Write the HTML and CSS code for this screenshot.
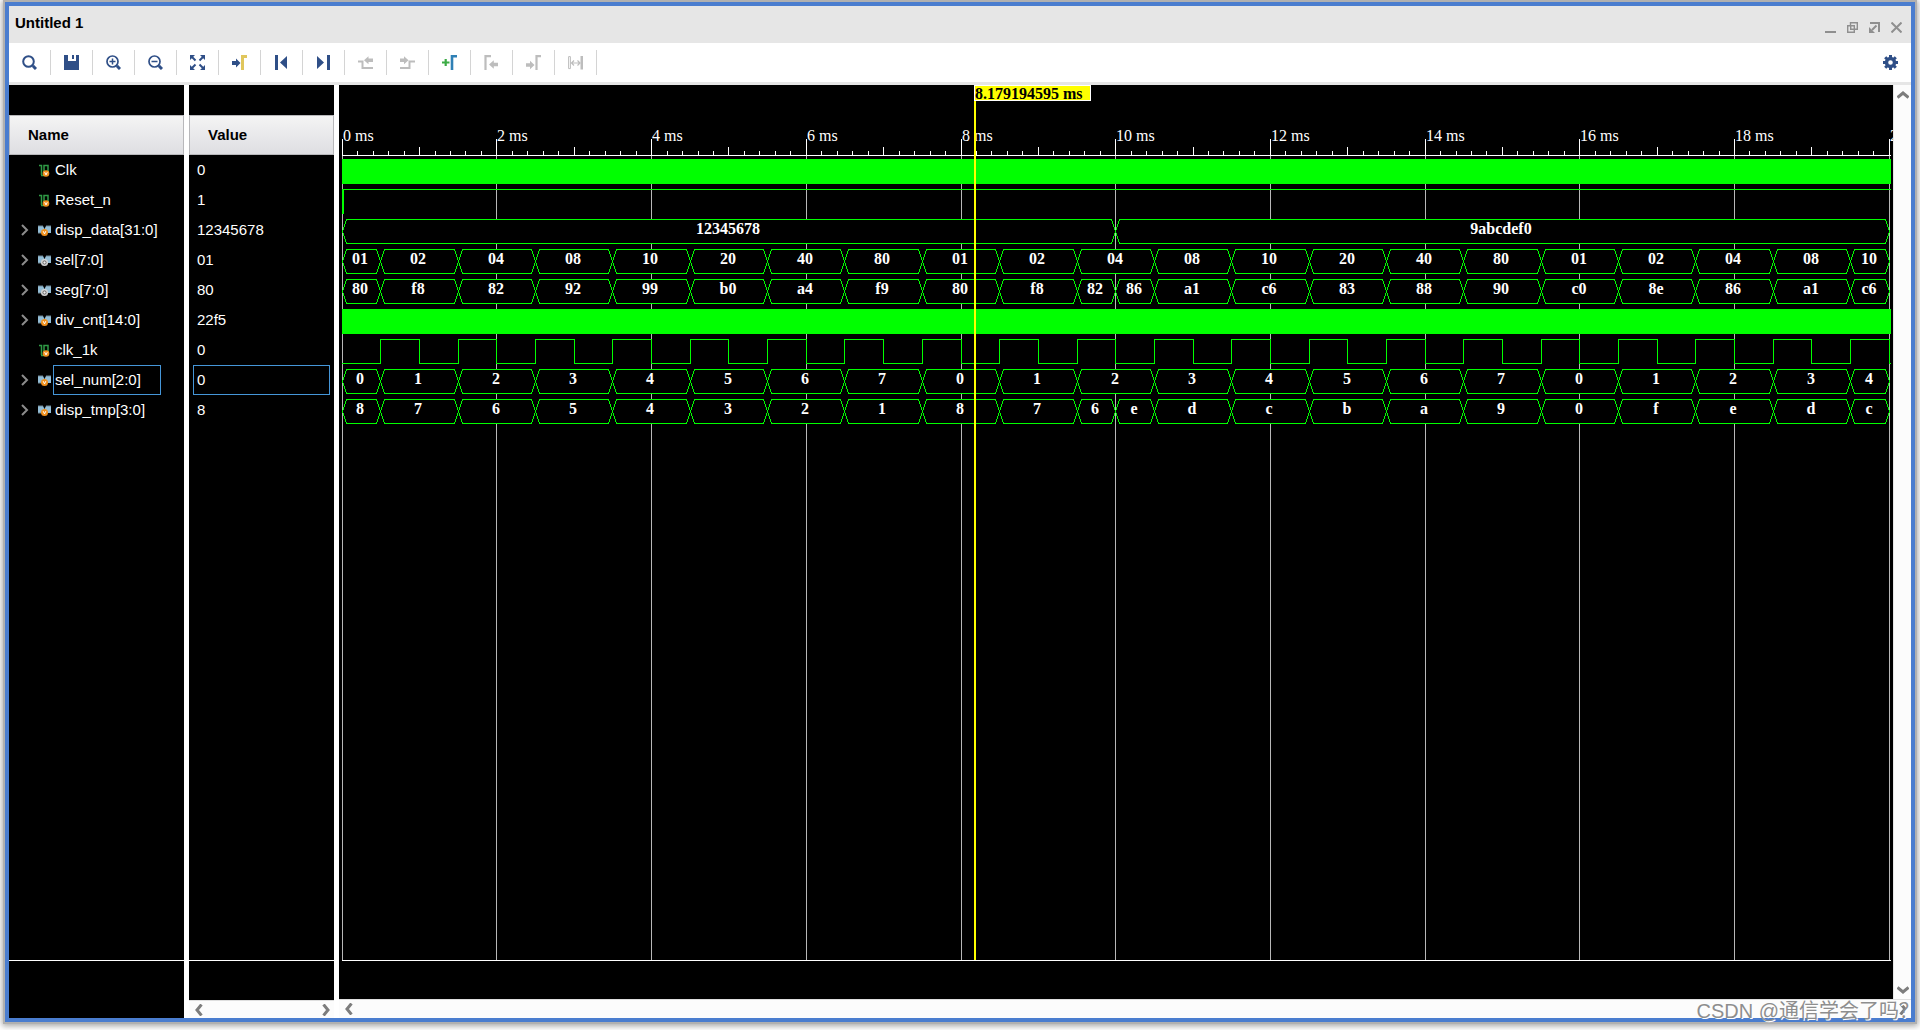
FILE: index.html
```html
<!DOCTYPE html>
<html lang="en">
<head>
<meta charset="utf-8">
<title>Untitled 1</title>
<link rel="stylesheet" href="styles.css">
</head>
<body>
<svg class="symbols" aria-hidden="true">
  <symbol id="chevron" viewBox="0 0 8 12"><path d="M1 1l5 5-5 5" fill="none" stroke="currentColor" stroke-width="2"/></symbol>
  <symbol id="scroll" viewBox="0 0 8 12"><path d="M1.500 .5L6 6l-4.500 5.500" fill="none" stroke="currentColor" stroke-width="3"/></symbol>
  <symbol id="wire" viewBox="0 0 13 13">
    <path d="M1 1.500h2.500V11M3 11.500h3V1.500h4V8" fill="none" stroke="#2f9a45" stroke-width="1.500"/>
    <circle cx="8" cy="9.500" r="3.300" fill="#f0901e"/><path d="M6.700 8.200L8 10.900l1.300-2.700" fill="none" stroke="#fff" stroke-width="1"/>
  </symbol>
  <symbol id="bus" viewBox="0 0 13 13">
    <path d="M0 2h5l1.500 3L8 2h5v7h-3L6.500 7 3 9H0z" fill="#93bdd6"/><path d="M0 2h5M8 2h5M0 9h3" stroke="#6f8794" stroke-width="1"/>
    <circle cx="6.500" cy="8.500" r="3.500" fill="#f0901e"/><path d="M5.200 7.200l1.300 2.700 1.300-2.700" fill="none" stroke="#fff" stroke-width="1"/>
  </symbol>
  <symbol id="busout" viewBox="0 0 13 13">
    <path d="M0 2h5l1.500 3L8 2h5v7h-3L6.500 7 3 9H0z" fill="#93bdd6"/><path d="M0 2h5M8 2h5M0 9h3" stroke="#6f8794" stroke-width="1"/>
    <circle cx="6.500" cy="8.500" r="3.600" fill="#d2d2d2"/><circle cx="6.500" cy="8.500" r="1.600" fill="#eee" stroke="#666"/>
  </symbol>
</svg>

<main class="window">
  <header class="titlebar">
    <h1 class="title">Untitled 1</h1>
    <div class="controls">
      <button class="control" aria-label="Minimize"><svg viewBox="0 0 11 11"><path d="M0 10h11" stroke="currentColor" stroke-width="2"/></svg></button>
      <button class="control" aria-label="Restore"><svg viewBox="0 0 11 11"><path d="M3.500 3.500V.7h6.800v6.600H7.500M.7 3.700h6.600v6.600H.7zM3.700 3.700v3.600h3.600" fill="none" stroke="currentColor" stroke-width="1.400"/></svg></button>
      <button class="control" aria-label="Float"><svg viewBox="0 0 11 11"><path d="M1 1h9v9" fill="none" stroke="currentColor" stroke-width="2"/><path d="M7.500 3.500L3 8" stroke="currentColor" stroke-width="2"/><path d="M0 5v6h6z" fill="currentColor"/></svg></button>
      <button class="control" aria-label="Close"><svg viewBox="0 0 11 11"><path d="M.5.5l10 10M10.500.5l-10 10" stroke="currentColor" stroke-width="2"/></svg></button>
    </div>
  </header>

  <div class="toolbar" role="toolbar" aria-label="Waveform">
    <button class="tool" aria-label="Find"><svg viewBox="0 0 15 15"><circle cx="6.500" cy="6.500" r="5.300" fill="none" stroke="currentColor" stroke-width="2"/><path d="M10.800 10.800l3.200 3.200" stroke="currentColor" stroke-width="3"/></svg></button>
    <button class="tool" aria-label="Save"><svg viewBox="0 0 15 15"><path d="M0 0h4v6h8V0h3v15H0zM8 0h2v4H8z" fill="currentColor"/></svg></button>
    <button class="tool" aria-label="Zoom in"><svg viewBox="0 0 15 15"><circle cx="6.500" cy="6.500" r="5.500" fill="none" stroke="currentColor" stroke-width="1.700"/><path d="M10.800 10.800l3.200 3.200" stroke="currentColor" stroke-width="3"/><path d="M3.500 6.500h6M6.500 3.500v6" stroke="currentColor" stroke-width="1.500"/></svg></button>
    <button class="tool" aria-label="Zoom out"><svg viewBox="0 0 15 15"><circle cx="6.500" cy="6.500" r="5.500" fill="none" stroke="currentColor" stroke-width="1.700"/><path d="M10.800 10.800l3.200 3.200" stroke="currentColor" stroke-width="3"/><path d="M3.500 6.500h6" stroke="currentColor" stroke-width="1.500"/></svg></button>
    <button class="tool" aria-label="Zoom fit"><svg viewBox="0 0 15 15"><path d="M0 0h5L0 5zM10 0h5v5zM0 10v5h5zM15 10v5h-5z" fill="currentColor"/><path d="M1.500 1.500L5.500 5.500M13.500 1.500l-4 4M1.500 13.500l4-4M13.500 13.500l-4-4" stroke="currentColor" stroke-width="2"/></svg></button>
    <button class="tool" aria-label="Go to cursor"><svg viewBox="0 0 15 15"><path d="M0 6h4V3.500L8.500 8 4 12.500V10H0z" fill="currentColor"/><path d="M10.500 15V1.500H15" fill="none" stroke="#e0c65c" stroke-width="3"/></svg></button>
    <button class="tool" aria-label="Go to time 0"><svg viewBox="0 0 15 15"><path d="M1 0h3v15H1zM13 1v13L6 7.500z" fill="currentColor"/></svg></button>
    <button class="tool" aria-label="Go to last time"><svg viewBox="0 0 15 15"><path d="M11 0h3v15h-3zM1 1v13l7-6.500z" fill="currentColor"/></svg></button>
    <button class="tool off" aria-label="Previous transition"><svg viewBox="0 0 15 15"><path d="M0 6.500h4.500V13H15" fill="none" stroke="currentColor" stroke-width="2"/><path d="M6 5.200l4.500-4v2.300H15V7h-4.500v2.300z" fill="currentColor"/></svg></button>
    <button class="tool off" aria-label="Next transition"><svg viewBox="0 0 15 15"><path d="M0 13h9.500V6.500H15" fill="none" stroke="currentColor" stroke-width="2"/><path d="M8.500 5.200L4 1.200v2.300H0V7h4v2.300z" fill="currentColor"/></svg></button>
    <button class="tool" aria-label="Add marker"><svg viewBox="0 0 15 15"><path d="M0 7.500h7.500M3.700 4v7" stroke="#3cab45" stroke-width="2.200"/><path d="M10 15V1.200h5" fill="none" stroke="#2f80b5" stroke-width="2.600"/></svg></button>
    <button class="tool off" aria-label="Previous marker"><svg viewBox="0 0 15 15"><path d="M1.500 15V1.200H7" fill="none" stroke="currentColor" stroke-width="2.200"/><path d="M5 9.500l4.800-4.300v2.500H14v3.600H9.800v2.500z" fill="currentColor"/></svg></button>
    <button class="tool off" aria-label="Next marker"><svg viewBox="0 0 15 15"><path d="M10.500 15V1.200H15" fill="none" stroke="currentColor" stroke-width="2.200"/><path d="M8.500 10L4 5.700v2.500H0v3.600h4v2.500z" fill="currentColor"/></svg></button>
    <button class="tool off" aria-label="Swap cursors"><svg viewBox="0 0 15 15"><path d="M.6 1.600h1.800v12H.6z" fill="none" stroke="currentColor"/><path d="M12.500 1h2.500v13.500h-2.500z" fill="currentColor"/><path d="M3.500 8h8M6 5.500L3.500 8 6 10.500M9.500 5.500L12 8l-2.500 2.500" fill="none" stroke="currentColor" stroke-width="1.200"/></svg></button>
    <button class="tool settings" aria-label="Settings"><svg viewBox="0 0 15 15"><circle cx="7.500" cy="7.500" r="4" fill="none" stroke="currentColor" stroke-width="3.400"/><path d="M7.500 0v3M7.500 12v3M0 7.500h3M12 7.500h3M2.200 2.200l2 2M10.800 10.800l2 2M2.200 12.800l2-2M10.800 4.200l2-2" stroke="currentColor" stroke-width="3"/></svg></button>
  </div>

  <div class="panes">
    <section class="pane names">
      <table class="signals">
        <thead><tr><th scope="col">Name</th></tr></thead>
        <tbody>
          <tr><td><div class="signal"><span class="twist"></span><svg class="kind"><use href="#wire"/></svg><span class="label">Clk</span></div></td></tr>
          <tr><td><div class="signal"><span class="twist"></span><svg class="kind"><use href="#wire"/></svg><span class="label">Reset_n</span></div></td></tr>
          <tr><td><div class="signal"><button class="twist" aria-label="Expand disp_data"><svg><use href="#chevron"/></svg></button><svg class="kind"><use href="#bus"/></svg><span class="label">disp_data[31:0]</span></div></td></tr>
          <tr><td><div class="signal"><button class="twist" aria-label="Expand sel"><svg><use href="#chevron"/></svg></button><svg class="kind"><use href="#busout"/></svg><span class="label">sel[7:0]</span></div></td></tr>
          <tr><td><div class="signal"><button class="twist" aria-label="Expand seg"><svg><use href="#chevron"/></svg></button><svg class="kind"><use href="#busout"/></svg><span class="label">seg[7:0]</span></div></td></tr>
          <tr><td><div class="signal"><button class="twist" aria-label="Expand div_cnt"><svg><use href="#chevron"/></svg></button><svg class="kind"><use href="#bus"/></svg><span class="label">div_cnt[14:0]</span></div></td></tr>
          <tr><td><div class="signal"><span class="twist"></span><svg class="kind"><use href="#wire"/></svg><span class="label">clk_1k</span></div></td></tr>
          <tr><td><div class="signal"><button class="twist" aria-label="Expand sel_num"><svg><use href="#chevron"/></svg></button><svg class="kind"><use href="#bus"/></svg><span class="label focus">sel_num[2:0]</span></div></td></tr>
          <tr><td><div class="signal"><button class="twist" aria-label="Expand disp_tmp"><svg><use href="#chevron"/></svg></button><svg class="kind"><use href="#bus"/></svg><span class="label">disp_tmp[3:0]</span></div></td></tr>
        </tbody>
      </table>
      <div class="foot tall"></div>
    </section>

    <section class="pane values">
      <table class="signals">
        <thead><tr><th scope="col">Value</th></tr></thead>
        <tbody>
          <tr><td><div class="value">0</div></td></tr>
          <tr><td><div class="value">1</div></td></tr>
          <tr><td><div class="value">12345678</div></td></tr>
          <tr><td><div class="value">01</div></td></tr>
          <tr><td><div class="value">80</div></td></tr>
          <tr><td><div class="value">22f5</div></td></tr>
          <tr><td><div class="value">0</div></td></tr>
          <tr><td><div class="value focus">0</div></td></tr>
          <tr><td><div class="value">8</div></td></tr>
        </tbody>
      </table>
      <div class="foot"></div>
      <div class="hscroll">
        <button class="arrow left" aria-label="Scroll values left"><svg><use href="#scroll"/></svg></button>
        <button class="arrow" aria-label="Scroll values right"><svg><use href="#scroll"/></svg></button>
      </div>
    </section>

    <section class="plot">
      <div class="view">
        <div class="canvas"><svg id="waves" role="img" aria-label="Waveforms"></svg></div>
        <div class="vscroll">
          <button class="arrow up" aria-label="Scroll up"><svg><use href="#scroll"/></svg></button>
          <button class="arrow down" aria-label="Scroll down"><svg><use href="#scroll"/></svg></button>
        </div>
      </div>
      <div class="hscroll wide">
        <button class="arrow left" aria-label="Scroll waves left"><svg><use href="#scroll"/></svg></button>
        <button class="arrow" aria-label="Scroll waves right"><svg><use href="#scroll"/></svg></button>
      </div>
    </section>
  </div>
  <div class="watermark">CSDN @通信学会了吗？</div>
</main>
<script src="waves.js"></script>
</body>
</html>
```
FILE: styles.css
```css
* { box-sizing: border-box; }

body {
  margin: 0;
  background: #fff;
  color: #000;
  font: 15px/20px "Liberation Sans", Arial, sans-serif;
}

button {
  margin: 0;
  padding: 0;
  border: 0;
  background: none;
  color: inherit;
  font: inherit;
}

svg { display: block; }
.symbols { position: absolute; width: 0; height: 0; }

.window {
  position: relative;
  display: flex;
  flex-direction: column;
  min-height: calc(100vh - 10px);
  margin: 2px 5px 8px;
  border: 4px solid #4a7dcf;
  background: #fff;
  box-shadow: 0 0 0 2px #b0b0b0, 0 1px 6px 3px rgba(0, 0, 0, .35);
}

.titlebar {
  display: flex;
  justify-content: space-between;
  height: 37px;
  padding: 7px 9px 0 6px;
  background: #e6e6e6;
}
.title { margin: 0; font-size: 15px; line-height: 20px; }
.controls { display: flex; gap: 11px; padding-top: 9px; color: #8f8f8f; }
.control, .control svg { width: 11px; height: 11px; }

.toolbar {
  display: flex;
  height: 42px;
  padding: 7px 0;
  border-bottom: 3px solid #e6e6e6;
  color: #2f4f87;
}
.tool {
  display: flex;
  align-items: center;
  justify-content: center;
  width: 42px;
  height: 25px;
  border-right: 1px solid #d4d4d4;
}
.tool svg { width: 15px; height: 15px; }
.off { color: #bdbdbd; }
.settings { margin-left: auto; border-right: 0; }

.panes { display: flex; flex: 1; gap: 5px; }
.pane {
  display: flex;
  flex-direction: column;
  padding-top: 30px;
  background: #000;
  color: #fff;
}
.names { width: 175px; }
.values { width: 145px; }

.signals { width: 100%; border-spacing: 0; }
.signals th {
  height: 40px;
  padding: 0 18px;
  border: 1px solid #b8b8bb;
  background: linear-gradient(#f4f4f4, #dedee2);
  color: #000;
  text-align: left;
}
.signals td { height: 30px; padding: 0; }

.signal { display: flex; align-items: center; height: 30px; padding-left: 12px; }
.twist { width: 17px; color: #8c8c8c; }
.twist svg { width: 8px; height: 12px; }
.kind { width: 13px; height: 13px; }
.label, .value {
  height: 30px;
  border: 1px solid transparent;
  line-height: 28px;
}
.label { min-width: 108px; margin-left: 2px; padding-left: 1px; }
.value { margin: 0 4px; padding-left: 3px; }
.signals .focus { border-color: #4596d8; }

.foot { height: 40px; margin-top: auto; border-top: 1px solid #fff; }
.tall { height: 58px; }

.hscroll {
  display: flex;
  align-items: center;
  justify-content: space-between;
  height: 18px;
  padding: 0 4px 0 6px;
  border-top: 1px solid #dedede;
  background: #fcfcfc;
  color: #7d7d7d;
}
.wide { height: 19px; }
.arrow svg { width: 8px; height: 12px; }
.left svg { transform: rotate(180deg); }
.up svg { transform: rotate(-90deg); }
.down svg { transform: rotate(90deg); }

.plot { display: flex; flex: 1; flex-direction: column; min-width: 0; }
.view { display: flex; flex: 1; min-height: 400px; }
.canvas { position: relative; flex: 1; min-width: 0; overflow: hidden; background: #000; }
.canvas svg { position: absolute; width: 100%; height: 100%; }
.vscroll {
  display: flex;
  flex-direction: column;
  align-items: center;
  justify-content: space-between;
  width: 18px;
  padding: 4px 0 3px;
  border-left: 1px solid #e6e6e6;
  background: #fcfcfc;
  color: #7d7d7d;
}

.line { fill: none; stroke: #0f0; shape-rendering: crispEdges; }
.cell { fill: #000; stroke: #0f0; shape-rendering: crispEdges; }
.solid { fill: #0f0; }
.grid { stroke: #b8b8b8; shape-rendering: crispEdges; }
.ruler { fill: none; stroke: #fff; shape-rendering: crispEdges; }
.cursor { fill: #ff0; }
.flag { fill: #ff0; stroke: #fff; shape-rendering: crispEdges; }
.tick, .data, .time {
  fill: #fff;
  font: 16px "Liberation Serif", "Times New Roman", serif;
}
.data { font-weight: bold; text-anchor: middle; }
.time { fill: #000; font-weight: bold; }

.watermark {
  position: absolute;
  right: -8px;
  bottom: -5px;
  color: #8e8e8e;
  font: 20px/24px "Liberation Sans", "Noto Sans CJK SC", sans-serif;
  text-shadow: 1px 1px 0 #fff;
  white-space: nowrap;
  pointer-events: none;
}
```
FILE: waves.js
```js
const NS = 'http://www.w3.org/2000/svg';
const svg = document.getElementById('waves');

const END = 20;          // visible span, ms
const CURSOR = 8.179194595;
const LEFT = 3;
const RULER = 70;
const FIRST = 74;        // top of the first trace
const PITCH = 30;
const HIGH = 24;

// One value per clk_1k period; the first period starts half way through.
function periods(text) {
  return text.split(' ').map((v, i) => [i ? i - 0.5 : 0, v]);
}
function merge(before, after) {
  return periods(before).concat(after.split(' ').map((v, i) => [i ? 9.5 + i : 10, v]));
}

const traces = [
  { kind: 'solid' },
  { kind: 'high' },
  { kind: 'bus', cells: [[0, '12345678'], [10, '9abcdef0']] },
  { kind: 'bus', cells: periods('01 02 04 08 10 20 40 80 01 02 04 08 10 20 40 80 01 02 04 08 10') },
  { kind: 'bus', cells: merge('80 f8 82 92 99 b0 a4 f9 80 f8 82', '86 a1 c6 83 88 90 c0 8e 86 a1 c6') },
  { kind: 'solid' },
  { kind: 'clock' },
  { kind: 'bus', cells: periods('0 1 2 3 4 5 6 7 0 1 2 3 4 5 6 7 0 1 2 3 4') },
  { kind: 'bus', cells: merge('8 7 6 5 4 3 2 1 8 7 6', 'e d c b a 9 0 f e d c') }
];

function add(tag, cls, attrs, text) {
  const el = document.createElementNS(NS, tag);
  el.setAttribute('class', cls);
  for (const k in attrs) el.setAttribute(k, attrs[k]);
  if (text) el.textContent = text;
  svg.append(el);
}

function draw() {
  const w = svg.parentNode.clientWidth;
  const h = svg.parentNode.clientHeight;
  const right = w - 2;
  const base = h - 39;
  const x = t => Math.floor(LEFT + t * (w - 7) / END + 0.2) + 0.5;
  svg.replaceChildren();

  let ticks = `M${LEFT} ${RULER + 0.5}H${right}`;
  let grid = '';
  for (let i = 0; i <= END * 5; i++) {
    const len = i % 10 === 0 ? 16 : i % 5 === 0 ? 8 : 4;
    ticks += `M${x(i / 5)} ${RULER - len}v${len}`;
    if (i % 10 === 0) grid += `M${x(i / 5)} ${RULER + 1}V${base}`;
  }
  for (let t = 1; t < END; t += 2) ticks += `M${x(t)} ${RULER - 8}v8`;
  add('path', 'grid', { d: grid });
  add('path', 'ruler', { d: ticks + `M${LEFT} ${base + 0.5}H${right}` });
  for (let t = 0; t <= END; t += 2) {
    add('text', 'tick', { x: Math.floor(x(t)) + 1, y: 56 }, t + ' ms');
  }

  traces.forEach((trace, row) => {
    const top = FIRST + row * PITCH;
    const hi = top + 0.5;
    const lo = hi + HIGH;
    const mid = hi + HIGH / 2;
    if (trace.kind === 'solid') {
      add('rect', 'solid', { x: LEFT, y: top, width: right - LEFT, height: HIGH + 1 });
    } else if (trace.kind === 'high') {
      add('path', 'line', { d: `M${LEFT} ${hi}H${right}` });
      add('rect', 'solid', { x: LEFT, y: top, width: 2, height: HIGH + 1 });
    } else if (trace.kind === 'clock') {
      let d = `M${LEFT} ${lo}`;
      for (let t = 0.5; t < END; t++) d += `H${x(t)}V${hi}H${x(t + 0.5)}V${lo}`;
      add('path', 'line', { d: d + `H${right}` });
    } else {
      trace.cells.forEach(([start, value], i) => {
        const next = trace.cells[i + 1];
        const a = x(start);
        const b = x(next ? next[0] : END);
        add('path', 'cell', {
          d: `M${a} ${mid}L${a + 4} ${hi}H${b - 4}L${b} ${mid}L${b - 4} ${lo}H${a + 4}Z`
        });
        add('text', 'data', { x: Math.floor((a + b) / 2) - 1, y: top + 15 }, value);
      });
    }
  });

  const c = Math.floor(x(CURSOR));
  add('rect', 'cursor', { x: c, y: 0, width: 2, height: base });
  add('rect', 'flag', { x: c + 0.5, y: 0.5, width: 116, height: 15 });
  add('text', 'time', { x: c + 1, y: 14 }, CURSOR + ' ms');
}

new ResizeObserver(draw).observe(svg.parentNode);
draw();
```
